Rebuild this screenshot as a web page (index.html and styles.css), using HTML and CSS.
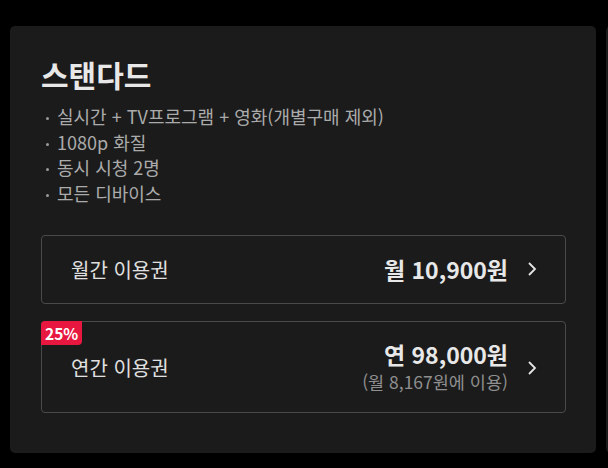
FILE: index.html
```html
<!DOCTYPE html>
<html lang="ko">
<head>
    <meta charset="UTF-8">
    <meta name="viewport" content="width=device-width, initial-scale=1.0">
    <title>이용권 선택</title>
    <link rel="stylesheet" href="styles.css">
</head>
<body>
    <div class="plans">
        <div class="plan-card">
            <h2 class="plan-name">스탠다드</h2>
            <ul class="features">
                <li>실시간 + TV프로그램 + 영화(개별구매 제외)</li>
                <li>1080p 화질</li>
                <li>동시 시청 2명</li>
                <li>모든 디바이스</li>
            </ul>

            <a href="#" class="option">
                <span class="option-label">월간 이용권</span>
                <span class="option-price">
                    <span class="price">월 10,900원</span>
                </span>
                <svg class="chevron" width="10" height="16" viewBox="0 0 10 16"><path d="M2 2l6 6-6 6" fill="none" stroke="#e6e6e6" stroke-width="1.8"/></svg>
            </a>

            <a href="#" class="option option-year">
                <span class="badge">25%</span>
                <span class="option-label">연간 이용권</span>
                <span class="option-price">
                    <span class="price">연 98,000원</span>
                    <span class="price-note">(월 8,167원에 이용)</span>
                </span>
                <svg class="chevron" width="10" height="16" viewBox="0 0 10 16"><path d="M2 2l6 6-6 6" fill="none" stroke="#e6e6e6" stroke-width="1.8"/></svg>
            </a>
        </div>
        <div class="plan-card"></div>
    </div>
</body>
</html>
```

FILE: styles.css
```css
* {
    margin: 0;
    padding: 0;
    box-sizing: border-box;
    font-family: 'Noto Sans CJK KR', 'Noto Sans', sans-serif;
}
body {
    background-color: #000;
    color: #fff;
    overflow: hidden;
}
.plans {
    display: flex;
    gap: 10px;
    padding: 26px 0 0 10px;
    overflow: hidden;
}
.plan-card {
    flex: 0 0 586px;
    height: 427px;
    background: #1b1b1b;
    border-radius: 5px;
    padding: 27px 30px 0 31px;
}
.plan-name {
    font-size: 30px;
    line-height: 42px;
    font-weight: 700;
    color: #e8e8e8;
}
.features {
    list-style: none;
    margin-top: 9px;
}
.features li {
    font-size: 18px;
    line-height: 25.7px;
    color: #ababab;
    padding-left: 16px;
    position: relative;
}
.features li::before {
    content: '';
    position: absolute;
    left: 5px;
    top: 13px;
    width: 3px;
    height: 3px;
    border-radius: 50%;
    background: #9a9a9a;
}
.option {
    display: flex;
    align-items: center;
    position: relative;
    min-height: 69px;
    margin-top: 28px;
    padding: 0 28px 0 29px;
    border: 1px solid #4a4a4a;
    border-radius: 4px;
    text-decoration: none;
    color: #e6e6e6;
}
.option-year {
    min-height: 92px;
    margin-top: 17px;
    padding-top: 2px;
}
.option-label {
    flex: 1;
    font-size: 20px;
    color: #e0e0e0;
}
.option-price {
    display: flex;
    flex-direction: column;
    align-items: flex-end;
    margin-right: 19px;
}
.price {
    font-size: 23px;
    line-height: 28px;
    font-weight: 700;
    color: #e8e8e8;
}
.price-note {
    font-size: 17.5px;
    line-height: 28px;
    color: #8f8f8f;
}
.chevron {
    display: block;
}
.badge {
    position: absolute;
    top: -1px;
    left: -1px;
    padding: 0 4px;
    height: 24px;
    line-height: 24px;
    background: #e8173f;
    color: #fff;
    font-size: 15.5px;
    font-weight: 700;
    border-radius: 4px 0 4px 0;
}
```
